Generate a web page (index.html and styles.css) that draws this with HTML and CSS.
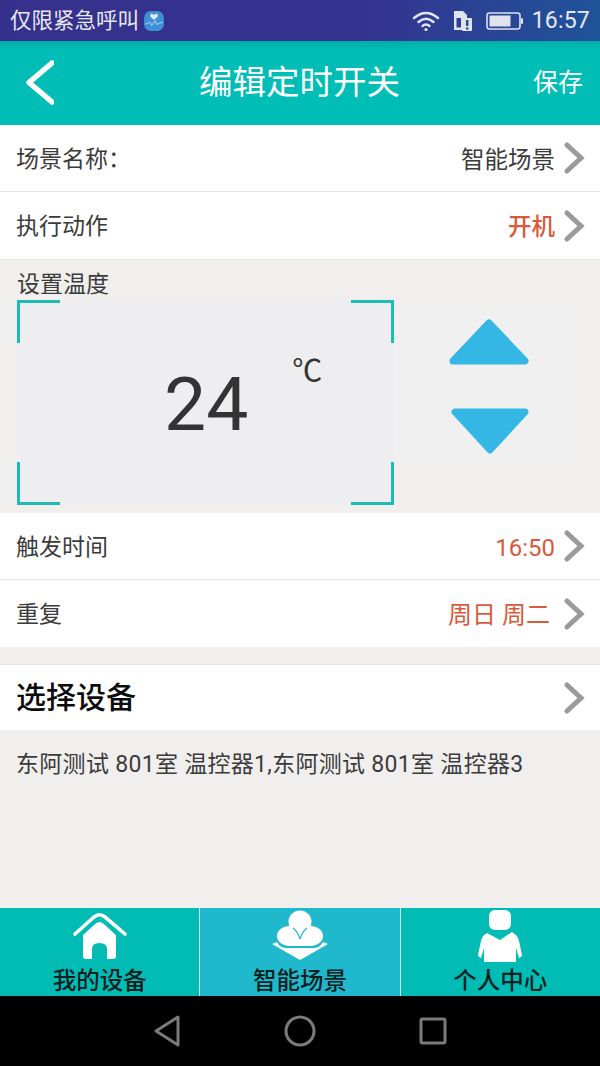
FILE: index.html
```html
<!DOCTYPE html>
<html lang="zh-CN">
<head>
  <meta charset="UTF-8" />
  <meta name="viewport" content="width=device-width, initial-scale=1.0"/>
  <title>编辑定时开关</title>
  <link rel="stylesheet" href="styles.css">
</head>
<body>
  <div class="phone">

    <div class="status-bar">
      <div class="status-left">
        <span>仅限紧急呼叫</span>
        <svg class="app-icon" width="22" height="22" viewBox="0 0 20 20">
          <rect x="1" y="1" width="18" height="18" rx="6" fill="#3f8fd6"/>
          <path d="M10 9 L6.6 5.8 Q6 3.2 8.4 3.4 L10 4.6 L11.6 3.4 Q14 3.2 13.4 5.8 Z" fill="#dfeaf6"/>
          <path d="M2 13 L6 11 L8 14 L11 10 L13 13 L18 11" fill="none" stroke="#9cc8ee" stroke-width="1"/>
        </svg>
      </div>
      <div class="status-right">
        <svg width="28" height="22" viewBox="0 0 28 22" fill="none" stroke="#e3e6f1" stroke-width="2.4" stroke-linecap="round">
          <path d="M2 8 Q14 -2 26 8"/>
          <path d="M6.5 12 Q14 5.5 21.5 12"/>
          <path d="M10.5 16 Q14 13 17.5 16"/>
          <circle cx="14" cy="19.5" r="1.6" fill="#e3e6f1" stroke="none"/>
        </svg>
        <svg class="sim-icon" width="20" height="22" viewBox="0 0 20 22">
          <path d="M1 1 H10 L14 5 V20 H1 Z M3.5 8 V17.5 H8 V8 Z" fill="#dfe3ee" fill-rule="evenodd"/>
          <rect x="9" y="8" width="10" height="13" rx="1" fill="#dfe3ee"/>
          <rect x="13" y="10" width="2.4" height="6" fill="#2a4a92"/>
          <rect x="13" y="17.4" width="2.4" height="2.2" fill="#2a4a92"/>
        </svg>
        <svg class="battery-icon" width="38" height="18" viewBox="0 0 38 18">
          <rect x="1" y="1" width="33" height="16" rx="2.5" fill="none" stroke="#dfe3ee" stroke-width="1.6"/>
          <rect x="3.5" y="3.5" width="21" height="11" fill="#dfe3ee"/>
          <rect x="35" y="6" width="2" height="6" rx="1" fill="#dfe3ee"/>
        </svg>
        <span class="clock">16:57</span>
      </div>
    </div>

    <div class="header">
      <div class="back">
        <svg width="34" height="48" viewBox="0 0 34 48" fill="none" stroke="#fff" stroke-width="5.5" stroke-linecap="round" stroke-linejoin="round">
          <path d="M32 4 L9 23.5 L32 43"/>
        </svg>
      </div>
      <h1>编辑定时开关</h1>
      <span class="save">保存</span>
    </div>

    <div class="row">
      <span class="row-label">场景名称：</span>
      <span class="row-value">智能场景</span>
      <svg class="chevron" width="22" height="32" viewBox="0 0 22 32"><path d="M4 3 L18 16 L4 29" /></svg>
    </div>
    <div class="row row-last">
      <span class="row-label">执行动作</span>
      <span class="row-value orange bold">开机</span>
      <svg class="chevron" width="22" height="32" viewBox="0 0 22 32"><path d="M4 3 L18 16 L4 29" /></svg>
    </div>

    <div class="temp-section">
      <div class="temp-title">设置温度</div>
      <div class="temp-body">
        <div class="temp-panel">
          <span class="corner top-left"></span>
          <span class="corner top-right"></span>
          <span class="corner bottom-left"></span>
          <span class="corner bottom-right"></span>
          <span class="temp-number">24</span>
          <span class="temp-unit">℃</span>
        </div>
        <div class="temp-buttons">
          <svg width="80" height="47" viewBox="0 0 80 47">
            <path d="M40 4 L76 42 H4 Z" fill="#35b7e6" stroke="#35b7e6" stroke-width="7" stroke-linejoin="round"/>
          </svg>
          <svg width="80" height="47" viewBox="0 0 80 47">
            <path d="M6 5 H76 L41 43 Z" fill="#35b7e6" stroke="#35b7e6" stroke-width="7" stroke-linejoin="round"/>
          </svg>
        </div>
      </div>
    </div>

    <div class="row">
      <span class="row-label">触发时间</span>
      <span class="row-value orange time">16:50</span>
      <svg class="chevron" width="22" height="32" viewBox="0 0 22 32"><path d="M4 3 L18 16 L4 29" /></svg>
    </div>
    <div class="row row-last">
      <span class="row-label">重复</span>
      <span class="row-value orange repeat">周日 周二</span>
      <svg class="chevron" width="22" height="32" viewBox="0 0 22 32"><path d="M4 3 L18 16 L4 29" /></svg>
    </div>

    <div class="row row-device">
      <span class="row-label device-label">选择设备</span>
      <svg class="chevron" width="22" height="32" viewBox="0 0 22 32"><path d="M4 3 L18 16 L4 29" /></svg>
    </div>

    <div class="device-list">东阿测试 801室 温控器1,东阿测试 801室 温控器3</div>

    <div class="tabs">
      <div class="tab">
        <svg width="56" height="56" viewBox="0 0 56 56" fill="#fff">
          <path d="M3 24 L22 7 Q27.5 2.5 33 7 L53 24" fill="none" stroke="#fff" stroke-width="3.6" stroke-linecap="round" stroke-linejoin="round"/>
          <path fill-rule="evenodd" d="M27.5 12 Q30 12 33 15 L44 25 V46 Q44 49 41 49 H14 Q11 49 11 46 V25 L22 15 Q25 12 27.5 12 Z M20 49 H35 V39 Q35 33 27.5 33 Q20 33 20 39 Z"/>
        </svg>
        <span>我的设备</span>
      </div>
      <div class="tab tab-active">
        <svg width="56" height="56" viewBox="0 0 56 56" fill="#fff">
          <circle cx="28" cy="12" r="11.5"/>
          <ellipse cx="17" cy="26" rx="12" ry="10"/>
          <ellipse cx="39" cy="26" rx="12" ry="10"/>
          <rect x="15" y="20" width="26" height="16"/>
          <path d="M28 29 Q26 22 21 18 M28 29 Q30 22 35 18" fill="none" stroke="#1fb8cc" stroke-width="1.2"/>
          <path d="M0 34 L5 32 Q8 38 15 38 H41 Q48 38 51 32 L56 34 L28 50 Z"/>
        </svg>
        <span>智能场景</span>
      </div>
      <div class="tab">
        <svg width="56" height="56" viewBox="0 0 56 56" fill="#fff">
          <rect x="17" y="0" width="22" height="20" rx="6"/>
          <path d="M15 23 L28 30 L40 22 L44 25 Q46 27 47 31 L50 45 Q50 47 47 48 L44 38 V52 H12 V38 L9 48 Q6 47 6 45 L9 31 Q10 27 12 25 Z"/>
        </svg>
        <span>个人中心</span>
      </div>
    </div>

    <div class="nav-bar">
      <svg width="28" height="34" viewBox="0 0 28 34" fill="none" stroke="#7b7b7b" stroke-width="3" stroke-linejoin="round">
        <path d="M25 3 V31 L3 17 Z"/>
      </svg>
      <svg width="32" height="32" viewBox="0 0 32 32" fill="none" stroke="#7b7b7b" stroke-width="3">
        <circle cx="16" cy="16" r="14"/>
      </svg>
      <svg width="28" height="28" viewBox="0 0 28 28" fill="none" stroke="#7b7b7b" stroke-width="3" stroke-linejoin="round">
        <rect x="2" y="2" width="24" height="24" rx="1.5"/>
      </svg>
    </div>

  </div>
</body>
</html>
```

FILE: styles.css
```css
* {
  margin: 0;
  padding: 0;
  box-sizing: border-box;
}

body {
  font-family: Roboto, "Noto Sans CJK SC", sans-serif;
  background: #f0efee;
}

.phone {
  width: 600px;
  height: 1066px;
  display: flex;
  flex-direction: column;
  overflow: hidden;
}

.status-bar {
  height: 41px;
  flex: none;
  display: flex;
  align-items: center;
  justify-content: space-between;
  padding: 0 10px;
  color: #e8e8f2;
  background: linear-gradient(to right, #35308c, #353390 60%, #1e5399);
  font-size: 21.5px;
  line-height: 30px;
}

.status-left {
  display: flex;
  align-items: center;
  gap: 4px;
}

.status-right {
  display: flex;
  align-items: center;
}

.sim-icon {
  margin-left: 13px;
}

.battery-icon {
  margin-left: 13px;
}

.clock {
  margin-left: 8px;
  font-size: 23px;
  letter-spacing: 0.2px;
}

.header {
  height: 84px;
  flex: none;
  display: flex;
  align-items: center;
  justify-content: space-between;
  padding: 0 17px 0 20px;
  color: #fff;
  background: linear-gradient(to bottom, #00aea8, #00bdb5 10%);
}

.back {
  width: 98px;
  display: flex;
}

.header h1 {
  font-size: 33.5px;
  font-weight: 400;
  line-height: 44px;
}

.save {
  width: 102px;
  text-align: right;
  font-size: 25px;
  line-height: 34px;
}

.row {
  height: 67px;
  flex: none;
  display: flex;
  align-items: center;
  padding: 0 15px 0 16px;
  background: #fff;
  border-bottom: 1px solid #e6e6e6;
  font-size: 23px;
  line-height: 30px;
  color: #3b3b3b;
}

.row-last {
  border-bottom: none;
}

.row-label {
  flex: 1;
  padding-top: 3px;
}

.row-value {
  margin-right: 8px;
  padding-top: 3px;
  font-size: 23.5px;
}

.repeat {
  margin-right: 13px;
  font-size: 24px;
}

.time {
  font-size: 24px;
}

.orange {
  color: #d9593a;
}

.bold {
  font-weight: 500;
}

.chevron {
  fill: none;
  stroke: #9a9a9a;
  stroke-width: 5;
  stroke-linejoin: miter;
  stroke-linecap: round;
}

.temp-section {
  height: 254px;
  flex: none;
  background: #f0efee;
  padding: 10px 16px 0 17px;
  border-top: 1px solid #e6e6e6;
}

.temp-title {
  height: 30px;
  font-size: 23px;
  line-height: 30px;
  color: #3b3b3b;
}

.temp-body {
  display: flex;
  align-items: flex-start;
}

.temp-panel {
  position: relative;
  width: 377px;
  height: 205px;
  display: flex;
  background: #eeeef0;
  color: #333;
}

.temp-number {
  margin: 55px 0 0 147px;
  font-size: 75px;
  line-height: 98px;
}

.temp-unit {
  margin: 48px 0 0 44px;
  font-size: 30px;
  line-height: 46px;
}

.corner {
  position: absolute;
  width: 43px;
  height: 43px;
  border: 0 solid #1fbab5;
}

.top-left {
  top: 0;
  left: 0;
  border-width: 3px 0 0 3px;
}

.top-right {
  top: 0;
  right: 0;
  border-width: 3px 3px 0 0;
}

.bottom-left {
  bottom: 0;
  left: 0;
  border-width: 0 0 3px 3px;
}

.bottom-right {
  bottom: 0;
  right: 0;
  border-width: 0 3px 3px 0;
}

.temp-buttons {
  width: 190px;
  height: 158px;
  margin-top: 7px;
  padding-top: 12px;
  display: flex;
  flex-direction: column;
  align-items: center;
  gap: 41px;
  background: #f0f0f1;
  border-radius: 0 14px 14px 0;
}

.row-device {
  margin-top: 17px;
  height: 66px;
  border-top: 1px solid #e6e6e6;
  border-bottom: none;
}

.device-label {
  font-size: 30px;
  line-height: 40px;
  font-weight: 500;
  color: #0c0c0c;
  padding-top: 0;
}

.device-list {
  flex: 1;
  padding: 18px 16px 0;
  font-size: 23px;
  line-height: 34px;
  letter-spacing: 0.3px;
  color: #3b3b3b;
  background: #f0efee;
}

.tabs {
  height: 88px;
  flex: none;
  display: flex;
  background: #00bcb4;
}

.tab {
  flex: 1;
  display: flex;
  flex-direction: column;
  align-items: center;
  font-size: 23.5px;
  line-height: 30px;
  font-weight: 500;
  color: #0b1f20;
  border-right: 1px solid #cfeeed;
}

.tab:last-child {
  border-right: none;
}

.tab svg {
  flex: none;
  margin-top: 2px;
}

.tab-active {
  background: #1fb8cc;
}

.nav-bar {
  height: 70px;
  flex: none;
  display: flex;
  align-items: center;
  justify-content: center;
  gap: 103px;
  background: #000;
}
```
